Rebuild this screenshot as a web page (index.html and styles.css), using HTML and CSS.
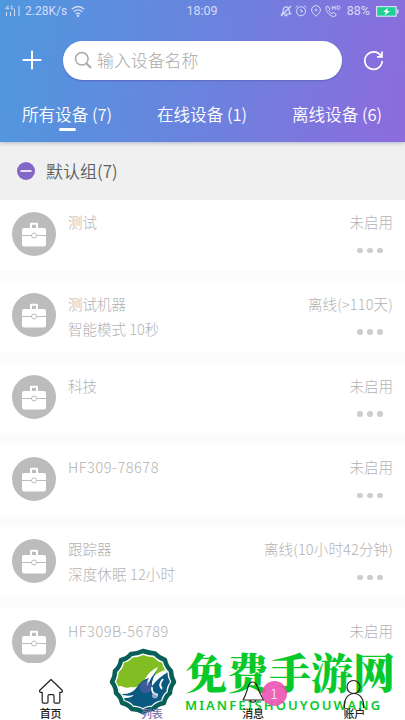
FILE: index.html
```
<!DOCTYPE html>
<html lang="zh-CN">
<head>
<meta charset="utf-8">
<title>设备列表</title>
<link rel="stylesheet" href="styles.css">
</head>
<body>
<svg width="0" height="0" class="defs">
  <symbol id="case" viewBox="0 0 44 44">
    <circle cx="22" cy="22" r="22" fill="#bcbcbc"/>
    <path d="M19 16v-4.300h6V16" fill="none" stroke="#fff" stroke-width="2" stroke-linejoin="round"/>
    <rect x="10" y="16" width="24" height="18.500" rx="2" fill="#fff"/>
    <path d="M10 23.500h24" stroke="#bcbcbc"/>
    <circle cx="22" cy="23.500" r="2.500" fill="#fff" stroke="#bcbcbc"/>
  </symbol>
</svg>
<div class="screen">
  <header class="header">
    <div class="status">
      <div class="status-left">
        <svg width="16" height="12" viewBox="0 0 16 12" fill="none" stroke="currentColor"><path d="M1.500 7v4M5.500 7v4M9.500 4v7M14 1v10"/><path d="M3 .7L.6 3.500h3.200M3 .7v4M8 1H6.200v3H8V2.800" stroke-width=".8"/></svg>
        <span class="speed">2.28K/s</span>
        <svg width="14" height="12" viewBox="0 0 14 12" fill="none" stroke="currentColor" stroke-width="1.200"><path d="M.7 4.300q6.300-5.600 12.600 0M2.700 6.700q4.300-3.600 8.600 0M4.700 9q2.300-1.800 4.600 0"/><circle cx="7" cy="10.800" r=".6" fill="currentColor"/></svg>
      </div>
      <div class="clock">18:09</div>
      <div class="status-right">
        <svg width="12" height="12" viewBox="0 0 12 12" fill="none" stroke="currentColor" stroke-width="1.200"><path d="M2 9c1.500-1.500 1-4 1.600-5.500 1-2.300 4-2.300 5 0C9.200 5 9 7.500 10.500 9zM4.500 10.700h3M11 1L1 11"/></svg>
        <svg width="12" height="12" viewBox="0 0 12 12" fill="none" stroke="currentColor"><circle cx="6" cy="6.300" r="4.500"/><path d="M6 4v2.500h2M.7 2.500L2.800.8M11.300 2.500L9.200.8"/></svg>
        <svg width="12" height="12" viewBox="0 0 12 12" fill="none" stroke="currentColor"><path d="M6 11.300C3.500 8.700 1.600 7 1.600 5a4.400 4.300 0 0 1 8.800 0c0 2-1.900 3.700-4.400 6.300z"/><circle cx="6" cy="5" r=".8"/></svg>
        <svg width="17" height="12" viewBox="0 0 17 12" fill="none" stroke="currentColor"><path d="M1 2l2-1 2 3-1.200 1.300c.7 1.700 1.700 2.700 3.200 3.200L8.500 7.500l2.800 2-1.300 1.800C5.500 12.500.5 6.500 1 2z"/><path d="M7.300.7v4M7.300 2.700h2.800M10.100.7v4M12.200 1v3.300c4 .3 4-3.600 0-3.300z"/></svg>
        <span class="percent">88%</span>
        <svg width="23" height="11" viewBox="0 0 23 11"><rect x=".6" y=".6" width="19.500" height="9.600" fill="#20cf94" stroke="#d9dcf8" stroke-width="1.200"/><path d="M21.700 3.500v4" stroke="#d9dcf8" stroke-width="1.600"/><path d="M12 1.800L7 6h3l-1.300 3.200L14 5h-3z" fill="#fff"/></svg>
      </div>
    </div>
    <div class="toolbar">
      <svg class="plus" width="20" height="20" viewBox="0 0 20 20" stroke="#fff" stroke-width="2"><path d="M.7 10h18.600M10 .7v18.600"/></svg>
      <div class="search">
        <svg width="19" height="19" viewBox="0 0 19 19" fill="none" stroke="#a9a9a9" stroke-width="1.500"><circle cx="7.800" cy="7.800" r="6.300"/><path d="M12.300 12.300L17 17" stroke-width="2"/></svg>
        <span>输入设备名称</span>
      </div>
      <svg class="reload" width="21" height="21" viewBox="0 0 21 21" fill="none" stroke="#fff" stroke-width="1.700"><path d="M18.200 6.500A8.700 8.700 0 1 0 19.200 11"/><path d="M19 1.500v5.300h-5"/></svg>
    </div>
    <div class="tabs">
      <div class="tab active">所有设备 (7)</div>
      <div class="tab">在线设备 (1)</div>
      <div class="tab">离线设备 (6)</div>
    </div>
  </header>
  <div class="group">
    <svg width="18" height="18" viewBox="0 0 18 18"><circle cx="9" cy="9" r="9" fill="#8465c8"/><path d="M3.500 9h11" stroke="#fff" stroke-width="1.600"/></svg>
    <span>默认组(7)</span>
  </div>
  <main class="list">
    <div class="device"><svg class="avatar"><use href="#case"/></svg><div class="info"><div>测试</div></div><div class="state"><div>未启用</div><div class="more"><i></i><i></i><i></i></div></div></div>
    <div class="device"><svg class="avatar"><use href="#case"/></svg><div class="info"><div>测试机器</div><div>智能模式 10秒</div></div><div class="state"><div class="wide">离线(&gt;110天)</div><div class="more"><i></i><i></i><i></i></div></div></div>
    <div class="device"><svg class="avatar"><use href="#case"/></svg><div class="info"><div>科技</div></div><div class="state"><div>未启用</div><div class="more"><i></i><i></i><i></i></div></div></div>
    <div class="device"><svg class="avatar"><use href="#case"/></svg><div class="info"><div class="code">HF309-78678</div></div><div class="state"><div>未启用</div><div class="more"><i></i><i></i><i></i></div></div></div>
    <div class="device"><svg class="avatar"><use href="#case"/></svg><div class="info"><div>跟踪器</div><div class="wide">深度休眠 12小时</div></div><div class="state"><div class="wide">离线(10小时42分钟)</div><div class="more"><i></i><i></i><i></i></div></div></div>
    <div class="device"><svg class="avatar"><use href="#case"/></svg><div class="info"><div class="code">HF309B-56789</div></div><div class="state"><div>未启用</div></div></div>
  </main>
  <nav class="nav">
    <div class="nav-item">
      <svg width="26" height="27" viewBox="0 0 26 27" fill="none" stroke="#222" stroke-width="1.200" stroke-linejoin="round"><path d="M13 1.500L1.800 12.300c-.8.900 0 2 1 2h1.400v9.200c0 1 .6 1.600 1.500 1.600h3.100c.8 0 1.200-.5 1.200-1.200v-6c0-.8.500-1.200 1.200-1.200h3.600c.7 0 1.200.4 1.200 1.200v6c0 .7.400 1.200 1.200 1.200h3.100c.9 0 1.500-.6 1.500-1.600v-9.200h1.400c1 0 1.800-1.100 1-2z"/></svg>
      <span>首页</span>
    </div>
    <div class="nav-item current">
      <svg width="26" height="27" viewBox="0 0 26 27" fill="#7560b2"><circle cx="6.500" cy="9" r="6" opacity=".5"/><circle cx="16" cy="17.500" r="3" fill="#c8c9eb" opacity=".7"/></svg>
      <span>列表</span>
    </div>
    <div class="nav-item">
      <svg width="26" height="27" viewBox="0 0 26 27" fill="none" stroke="#222" stroke-width="1.200" stroke-linejoin="round"><path d="M3 22h21c-3-3.500-4.500-8-6.500-13-1-3-2.500-5-5-5s-3.500 2-4.500 5C6.500 14 6 17 3 22zM10 22c.5 3 5.500 3 6 0"/></svg>
      <span>消息</span>
      <b class="badge">1</b>
    </div>
    <div class="nav-item">
      <svg width="26" height="31" viewBox="0 0 26 31" fill="none" stroke="#222" stroke-width="1.200"><circle cx="12.500" cy="8" r="6.500"/><path d="M3.500 29c-1-8 3-14.500 9.500-14.500s10.500 6.500 9.500 14.500"/></svg>
      <span>账户</span>
    </div>
  </nav>
  <div class="watermark">
    <svg width="68" height="67" viewBox="0 0 68 67">
      <defs>
        <path id="crest" d="M34 3Q40 5 46 5.500Q50 10 56 12Q57 18 62 23Q62 29 65 34Q61 39 61 45Q56 49 55 55Q48 56 44 61Q38 61 34 64Q29 61 23 61Q19 56 13 55Q12 49 7 45Q7 39 3 34Q6 29 6 23Q11 19 12 12Q18 11 22 6Q28 6 34 3Z"/>
        <clipPath id="inside"><use href="#crest" transform="translate(34 33.500) scale(.87) translate(-34 -33.500)"/></clipPath>
      </defs>
      <use href="#crest" fill="#fff" stroke="#075f57" stroke-width="4.500" stroke-linejoin="round"/>
      <g clip-path="url(#inside)">
        <path fill="#83bd24" d="M0 0h68v67H0z"/>
        <path fill="#fff" d="M0 40L12 38Q17 41 22 39Q30 41 36 31Q40 23 49 19L44 29Q50 23 60 21L68 67H0Z"/>
        <path fill="#095980" d="M11 46Q23 47 28 39Q32 32 40 30Q37 34 38 38Q42 29 48 22Q42 33 43 38Q49 30 59 24L68 34V67H0V50H17Q22 50 25 47Q18 49 11 46Z"/>
        <path d="M43 39q-1 7 6 8M54 31q-5 6-1 10" stroke="#fff" stroke-width="1.800" fill="none"/>
      </g>
    </svg>
    <div class="brand"><div class="brand-cn">免费手游网</div><div class="brand-en">MIANFEISHOUYOUWANG</div></div>
  </div>
</div>
</body>
</html>
```
FILE: styles.css
```
* { box-sizing: border-box; }
body { margin: 0; font-family: "Noto Sans CJK SC", sans-serif; font-weight: 300; }
svg { display: block; flex: none; }
.defs { position: absolute; }
.screen { position: relative; width: 405px; height: 720px; overflow: hidden; background: #fbfbfb; display: flex; flex-direction: column; }
.header { height: 142px; flex: none; background: linear-gradient(100deg, #4f98de 0%, #6a83de 50%, #8d6bdd 100%); color: #fff; box-shadow: 0 1px 4px #aeb4ca; z-index: 1; }
.status { height: 22px; display: grid; grid-template-columns: 1fr auto 1fr; align-items: center; padding: 0 6px 0 5px; color: #d5dcf8; font: 12px/22px Roboto, sans-serif; }
.status-left, .status-right { display: flex; align-items: center; }
.status-left { gap: 4px; }
.speed { width: 42px; font-size: 12px; white-space: nowrap; }
.clock { font-size: 12.5px; }
.status-right { justify-content: flex-end; gap: 3px; }
.percent { margin: 0 3px 0 2px; font-size: 12.5px; }
.toolbar { height: 76px; display: flex; align-items: center; padding: 0 21px 0 22px; }
.search { width: 279px; height: 39px; margin: 0 21px 0 21px; border-radius: 20px; background: #fff; box-shadow: 0 1px 2px #5d68bd; color: #aaa; display: flex; align-items: center; gap: 4px; padding-left: 11px; font-size: 16.9px; line-height: 36px; }
.search span { margin-top: -1px; }
.tabs { display: grid; grid-template-columns: repeat(3, 135px); height: 44px; }
.tab { position: relative; text-align: center; text-indent: -1px; font-size: 16.6px; line-height: 33px; font-weight: 350; white-space: nowrap; }
.tab.active::after { content: ""; position: absolute; left: 59px; top: 29.500px; width: 17px; height: 3px; border-radius: 2px; background: #fff; }
.group { height: 57.500px; flex: none; background: #f0f0f0; display: flex; align-items: center; gap: 11px; padding: 0 0 0 17px; color: #5e5e5e; font-size: 17px; font-weight: 350; line-height: 25px; }
.list { display: flex; flex-direction: column; gap: 11.500px; height: 463.500px; flex: none; overflow: hidden; }
.device { height: 70.250px; flex: none; display: flex; padding: 12px 12px 0 11.500px; background: #fff; color: #b2b2b2; font-size: 14.500px; line-height: 25px; white-space: nowrap; }
.avatar { width: 44px; height: 44px; }
.info { margin: -2.500px 0 0 12.500px; flex: 1; }
.code { letter-spacing: .55px; }
.wide { letter-spacing: .16px; }
.state { margin-top: -2.500px; text-align: right; }
.more { display: flex; justify-content: flex-end; gap: 4.500px; padding: 13.500px 10.500px 0 0; }
.more i { width: 5.500px; height: 5.500px; border-radius: 50%; background: #cdcdcd; }
.nav { position: absolute; z-index: 3; left: 0; right: 0; bottom: 0; height: 57px; display: grid; grid-template-columns: repeat(4, 1fr); }
.nav-item { position: relative; display: flex; flex-direction: column; align-items: center; justify-content: flex-end; color: #222; font-size: 11px; font-weight: 500; line-height: 13px; }
.nav-item svg { margin-bottom: 2px; }
.nav-item:last-child svg { margin-bottom: -3px; }
.current { color: #8175b5; }
.badge { position: absolute; left: 59px; top: 18px; width: 25px; height: 25px; border-radius: 50%; background: rgba(238, 82, 179, .9); color: #fff; text-align: center; font-size: 13px; font-weight: 300; line-height: 25px; }
.watermark { position: absolute; z-index: 2; left: 0; right: 0; bottom: 0; height: 57px; padding-left: 109px; background: #fff; display: flex; }
.watermark svg { margin-top: -15px; }
.brand { margin: -14.500px 0 0 8px; color: #08c92c; white-space: nowrap; }
.brand-cn { font-family: "Noto Serif CJK SC", "Noto Sans CJK SC", serif; font-size: 42px; font-weight: 900; line-height: 44px; height: 47.500px; }
.brand-en { font-family: "Noto Sans", sans-serif; font-size: 13px; font-weight: 600; letter-spacing: 2.080px; line-height: 18px; }
```
